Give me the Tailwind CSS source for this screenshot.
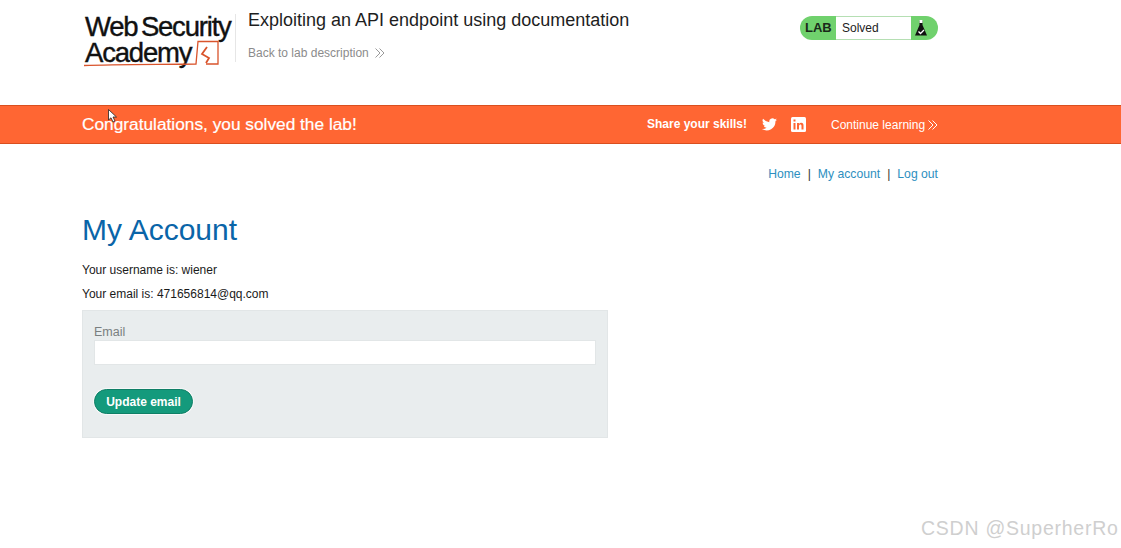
<!DOCTYPE html>
<html>
<head>
<meta charset="utf-8">
<script src="https://cdn.jsdelivr.net/npm/@tailwindcss/browser@4"></script>
</head>
<body class="bg-white font-['Liberation_Sans',Arial,sans-serif] text-[#1a1a1a] overflow-hidden">
<div class="relative w-[1121px] h-[548px] overflow-hidden">
  <header class="h-[105px] pl-[82px] w-[938px] flex items-start">
    <div class="relative w-[153px] h-[70px] mt-[14px] shrink-0 text-[#111] [-webkit-text-stroke:0.4px_#111]">
      <div class="text-[27.5px] leading-[26px] tracking-[-1.2px] [word-spacing:-3px] pl-[3px] whitespace-nowrap">Web Security</div>
      <div class="text-[27.5px] leading-[26px] tracking-[-1.2px] pl-[3px] whitespace-nowrap">Academy</div>
      <svg class="absolute left-0 top-[26px]" width="140" height="30" viewBox="0 0 140 30" fill="none">
        <path d="M2 25.500 C30 24.500 70 24.500 114 24 L116 1.500 H136 V24 H124" stroke="#d9542c" stroke-width="1.300"/>
        <path d="M125 7 L120 14 L127 18 L124 23" stroke="#d9542c" stroke-width="1.800"/>
      </svg>
    </div>
    <div class="w-px h-[48px] bg-[#e6e6e6] mt-[14px] shrink-0"></div>
    <div class="ml-[12px] w-[540px] shrink-0">
      <h2 class="text-[18px] leading-[22px] mt-[9px] text-[#1e1e1e] whitespace-nowrap">Exploiting an API endpoint using documentation</h2>
      <a class="flex items-center gap-[6px] mt-[14px] text-[12px] leading-[16px] text-[#8b8b8b]">Back to lab description
        <svg width="10" height="10" viewBox="0 0 10 10" fill="none" stroke="#9a9a9a" stroke-width="1"><path d="M0.500 0.500 L5 5 L0.500 9.500M4.500 0.500 L9 5 L4.500 9.500"/></svg>
      </a>
    </div>
    <div class="ml-auto mt-[16px] w-[138px] h-[24px] rounded-full bg-[#70d16d] flex items-stretch shrink-0 overflow-hidden">
      <span class="w-[36px] pl-[5px] text-[13px] font-bold leading-[24px] text-[#1a2a1a]">LAB</span>
      <span class="w-[75px] bg-white border-y border-[#b5dfb3] pl-[6px] text-[12px] leading-[22px] text-[#222]">Solved</span>
      <span class="flex-1 flex items-center pl-[3px]">
        <svg width="14" height="18" viewBox="0 0 14 18"><path d="M5.500 1.500 H8.500 V6 L13 16.500 H1 L5.500 6 Z" fill="#111"/><rect x="5.500" y="1" width="3" height="3" fill="#fff"/><path d="M4.500 12.500 L6.500 14.500 L10 11" stroke="#fff" stroke-width="1.300" fill="none"/></svg>
      </span>
    </div>
  </header>

  <section class="h-[39px] bg-[#ff6633] border-y border-[#d94f1f] pl-[82px] w-full flex items-center text-white">
    <h4 class="text-[17.300px] leading-[24px] w-[565px] shrink-0 -mt-[1px] [-webkit-text-stroke:0.2px_#fff]">Congratulations, you solved the lab!</h4>
    <span class="text-[12px] font-bold w-[115px] shrink-0 -mt-[1px]">Share your skills!</span>
    <svg class="shrink-0" width="15" height="13" viewBox="0 0 24 20" fill="#fff"><path d="M24 2.400a10 10 0 0 1-2.800.8A5 5 0 0 0 23.300.500a10 10 0 0 1-3.100 1.200 4.900 4.900 0 0 0-8.400 4.500A14 14 0 0 1 1.700.900a4.900 4.900 0 0 0 1.500 6.600 4.900 4.900 0 0 1-2.200-.6 4.900 4.900 0 0 0 3.900 4.900 4.900 4.900 0 0 1-2.200.1 4.900 4.900 0 0 0 4.600 3.400A9.900 9.900 0 0 1 0 17.300 14 14 0 0 0 21.500 4.900 10 10 0 0 0 24 2.400z"/></svg>
    <svg class="shrink-0 ml-[14px]" width="15" height="15" viewBox="0 0 15 15"><rect width="15" height="15" rx="1.500" fill="#fff"/><rect x="2.500" y="6" width="2" height="6.500" fill="#ff6633"/><rect x="2.500" y="2.500" width="2" height="2" fill="#ff6633"/><path d="M6 6h2v1c.5-.8 1.200-1.200 2.200-1.200 1.700 0 2.300 1 2.300 2.800v3.900h-2V9c0-.9-.3-1.500-1.100-1.500S8 8.100 8 9v3.500H6z" fill="#ff6633"/></svg>
    <span class="ml-[25px] text-[12px] leading-[16px] whitespace-nowrap">Continue learning</span>
    <svg class="ml-[3px] mt-[1px]" width="10" height="10" viewBox="0 0 10 10" fill="none" stroke="#fff" stroke-width="1"><path d="M0.500 0.500 L5 5 L0.500 9.500M4.500 0.500 L9 5 L4.500 9.500"/></svg>
  </section>

  <main class="pl-[82px] w-[938px]">
    <nav class="flex justify-end items-center pt-[22px] text-[12.200px] leading-[16px] text-[#2d8fc0]">
      <a>Home</a><span class="text-[#333] mx-[7px]">|</span><a>My account</a><span class="text-[#333] mx-[7px]">|</span><a>Log out</a>
    </nav>
    <h1 class="text-[30px] leading-[36px] text-[#0a65a8] mt-[30px]">My Account</h1>
    <p class="text-[12px] leading-[16px] mt-[14px] text-[#1a1a1a]">Your username is: wiener</p>
    <p class="text-[12px] leading-[16px] mt-[8px] text-[#1a1a1a]">Your email is: 471656814@qq.com</p>
    <form class="w-[526px] h-[128px] mt-[8px] bg-[#e9edee] border border-[#e2e6e7] px-[11px] pt-[13px]">
      <label class="block text-[12.500px] leading-[16px] text-[#7a7f80]">Email</label>
      <input type="text" class="block w-[502px] h-[25px] bg-white border border-[#e2e6e7] outline-none">
      <button type="button" class="block mt-[24px] w-[99px] h-[25px] rounded-full bg-[#149a7c] border border-[#0f7f66] ring-1 ring-white/60 text-white text-[12px] font-bold leading-[20px] text-center">Update email</button>
    </form>
  </main>

  <svg class="absolute left-[108px] top-[109px]" width="10" height="14" viewBox="0 0 10 14"><path d="M0.500 0.500 V11 L3 8.800 L5 13 L7 12 L5 8 H8.500 Z" fill="#fff" stroke="#222" stroke-width="0.800"/></svg>
  <div class="absolute left-[921px] top-[516px] text-[19.500px] leading-[24px] tracking-[0.750px] text-[#cfcfcf] whitespace-nowrap">CSDN @SuperherRo</div>
</div>
</body>
</html>
